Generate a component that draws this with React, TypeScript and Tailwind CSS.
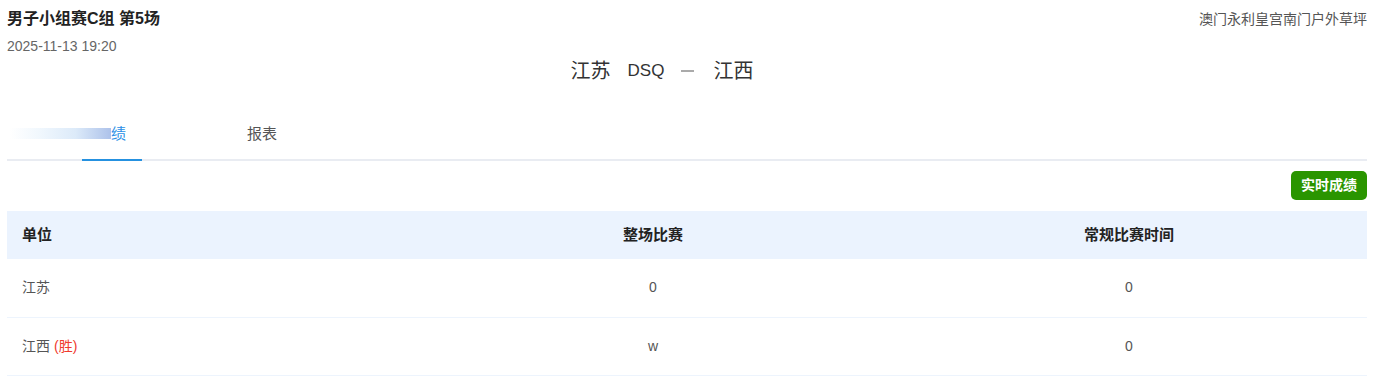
const font = { fontFamily: '"Liberation Sans", "Noto Sans CJK SC", sans-serif' }

const rows = [
  { team: '江苏', win: false, full: '0', regular: '0' },
  { team: '江西', win: true, full: 'w', regular: '0' },
]

export default function App() {
  return (
    <div className="min-h-screen bg-white pr-[16px] pl-[7px] text-[#333]" style={font}>
      <div className="flex items-start justify-between pt-[9px]">
        <div>
          <h1 className="text-[16px] leading-[20px] font-bold text-[#222]">男子小组赛C组 第5场</h1>
          <p className="mt-[9px] text-[14px] leading-[16px] text-[#666]">2025-11-13 19:20</p>
        </div>
        <p className="pt-[2px] text-[14px] leading-[16px] text-[#555]">澳门永利皇宫南门户外草坪</p>
      </div>

      <div className="mt-[5px] flex items-center justify-center gap-[17px] pr-[50px] text-[20px] leading-[24px] text-[#333]">
        <span>江苏</span>
        <span className="text-[17px]">DSQ</span>
        <span className="h-[2px] w-[13px] bg-[#aaa]" />
        <span className="ml-[2px]">江西</span>
      </div>

      <div className="mt-[31px] flex border-b-2 border-[#e9ecf2] text-[15px]">
        <div className="relative flex h-[45px] w-[135px] items-start pt-[10px] pl-[3px]">
          <span className="mt-[4px] h-[11px] w-[101px] bg-[linear-gradient(90deg,#ffffff_0%,#f0f7fd_30%,#dceaf9_65%,#adc2ea_100%)]" />
          <span className="leading-[20px] text-[#2b8fe6]">绩</span>
          <span className="absolute -bottom-[2px] left-[75px] h-[2px] w-[60px] bg-[#2591e0]" />
        </div>
        <div className="ml-[105px] pt-[10px] leading-[20px] text-[#555]">报表</div>
      </div>

      <div className="flex justify-end pt-[10px] pb-[11px]">
        <button className="h-[29px] w-[76px] rounded-[5px] bg-[#2a9500] text-[14px] font-bold text-white">实时成绩</button>
      </div>

      <table className="w-full border-collapse text-[14px]">
        <thead>
          <tr className="h-[48px] bg-[#ebf3fe] text-[15px] font-bold text-[#222]">
            <th className="w-[30%] px-[15px] text-left">单位</th>
            <th className="w-[35%] text-center">整场比赛</th>
            <th className="w-[35%] text-center">常规比赛时间</th>
          </tr>
        </thead>
        <tbody>
          {rows.map((r) => (
            <tr key={r.team} className="h-[58px] border-b border-[#edf4fd] text-[#555]">
              <td className="px-[15px]">
                {r.team}
                {r.win && <span className="ml-[4px] text-[#f03a2e]">(胜)</span>}
              </td>
              <td className="text-center">{r.full}</td>
              <td className="text-center">{r.regular}</td>
            </tr>
          ))}
        </tbody>
      </table>
    </div>
  )
}
